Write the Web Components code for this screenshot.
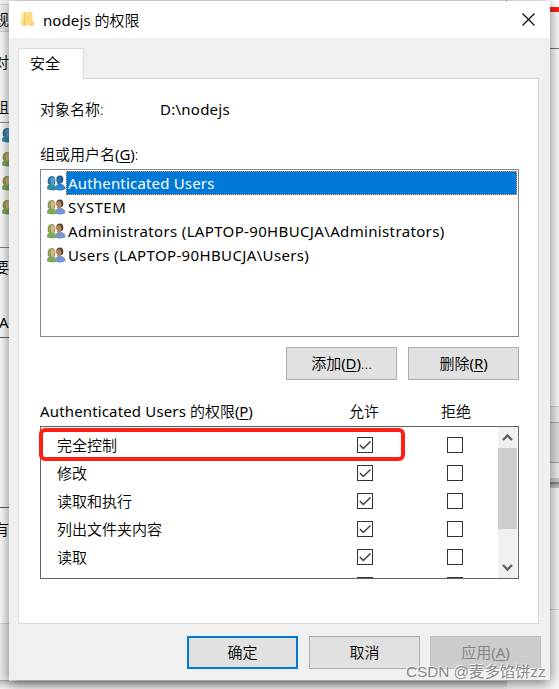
<!DOCTYPE html>
<html lang="zh-CN">
<head>
<meta charset="utf-8">
<title>nodejs 的权限</title>
<style>
html,body{margin:0;height:100%;overflow:hidden}
body{position:relative;background:#fafafa;color:#000;font:350 15px/20px "Noto Sans","Noto Sans CJK SC",sans-serif}
</style>
</head>
<body>
<back-windows></back-windows>
<perm-dialog></perm-dialog>
<water-mark>CSDN @麦多馅饼zz</water-mark>
<script>
function define(name, html){
  const t=document.createElement('template'); t.innerHTML=html;
  customElements.define(name, class extends HTMLElement{
    constructor(){super();this.attachShadow({mode:'open'}).append(t.content.cloneNode(true));}
  });
}
/* Latin run inside Chinese interface text */
define('latin-text', `<style>:host{display:inline;font-family:"Noto Sans",sans-serif;font-size:15px;font-weight:400;letter-spacing:var(--ls,0)}</style><slot></slot>`);
define('access-key', `<style>:host{display:inline;font-family:"Noto Sans",sans-serif;font-size:15px;font-weight:400;letter-spacing:-.1px}u{text-underline-offset:2px;text-decoration-thickness:1px}</style>(<u><slot></slot></u>)`);
define('folder-icon', `<style>:host{display:block;width:14px;height:17px}svg{display:block}</style>
<svg width="14" height="17" viewBox="0 0 14 17"><path d="M2 1H11.500V10.500H12.500V14.500H3Z" fill="#ffdc83"/><path d="M0 1L3.500 2V15L0 13.500Z" fill="#ffeab0"/><path d="M3 2.500L4 3V15.500L2.500 16V14L0 13V12L2.500 12.500Z" fill="#f2c75c"/><path d="M10.500 10.500H12.500V14.500H9.500Z" fill="#f3cd70"/></svg>`);
define('users-icon', `<style>:host{display:block;width:19px;height:16px;--h1:#8f9b49;--f1:#d8b98d;--b1:#7ea85b;--h2:#5d4535;--f2:#b98357;--b2:#7297cf}
:host([selected]){--h1:#2c779d;--f1:#5aa0c4;--b1:#328da3;--h2:#1b5b93;--f2:#2b71ad;--b2:#3481cd}svg{display:block}</style>
<svg width="19" height="16" viewBox="0 0 19 16"><path d="M1 9C0 5 1 1 5 1C8 1 9 4 8 9Z" style="fill:var(--h1)"/><ellipse cx="5.6" cy="5.2" rx="2.1" ry="3" style="fill:var(--f1)"/><path d="M0 14C0 10 2 8.500 5 8.500C8 8.500 9 11 9 15C5 16 2 15 0 14Z" style="fill:var(--b1)"/><path d="M4 8L6 11L7 8Z" style="fill:var(--f1)"/><ellipse cx="12.800" cy="4.500" rx="3.500" ry="4" style="fill:var(--h2)"/><ellipse cx="12" cy="5.800" rx="2.300" ry="3.600" style="fill:var(--f2)"/><path d="M8 14C8 10.500 10 9 13 9C16 9 18.500 10.500 18.500 14C15 16 11 16 8 14Z" style="fill:var(--b2)"/><path d="M10.500 8.500H13.500L12 11Z" style="fill:var(--f2)"/></svg>`);
define('push-button', `<style>:host{box-sizing:border-box;width:111px;height:33px;flex:none;display:flex;align-items:center;justify-content:center;background:#e1e1e1;border:1px solid #adadad;white-space:nowrap;padding-bottom:1px}
:host([primary]){border:2px solid #0078d7}:host([disabled]){background:#ccc;border-color:#bfbfbf;color:#838383}</style><span><slot></slot></span>`);
define('check-box', `<style>:host{display:block;box-sizing:border-box;width:16px;height:16px;border:1px solid #333;background:#fff}svg{display:none}:host([checked]) svg{display:block}</style>
<svg width="14" height="14" viewBox="0 0 14 14"><path d="M1.800 7L5.300 10.500L12.500 3.500" fill="none" stroke="#404040" stroke-width="1.500"/></svg>`);
define('user-row', `<style>:host{display:flex;height:24px;align-items:center}users-icon{margin:0 0 1px 5px}
.name{flex:1;box-sizing:border-box;height:24px;line-height:24px;padding-left:2px;white-space:nowrap}
:host([selected]) .name{background:#0078d7;color:#fff;outline:1px dotted #ff9035;outline-offset:-1px}</style>
<users-icon></users-icon><div class="name"><latin-text><slot></slot></latin-text></div>`);
define('perm-row', `<style>:host{display:grid;grid-template-columns:300px 90px 16px;height:28px;align-items:center;padding-left:16px}</style>
<slot></slot><check-box checked></check-box><check-box></check-box>`);
define('scroll-bar', `<style>:host{display:flex;flex-direction:column;width:19px;background:#f0f0f0}svg{display:block;height:21px;width:19px;flex:none}.thumb{height:81px;background:#cdcdcd}.space{flex:1}</style>
<svg viewBox="0 0 19 21"><path d="M5 13L9.500 8.500L14 13" fill="none" stroke="#606060" stroke-width="2.300"/></svg><div class="thumb"></div><div class="space"></div><svg viewBox="0 0 19 21"><path d="M5 8L9.500 12.500L14 8" fill="none" stroke="#606060" stroke-width="2.300"/></svg>`);
define('title-bar', `<style>:host{display:flex;box-sizing:border-box;align-items:center;height:37px;background:#fff;padding:0 15px 0 12px}.t{flex:1;padding-left:8px}svg{display:block}</style>
<folder-icon></folder-icon><div class="t"><slot></slot></div><svg width="13" height="13" viewBox="0 0 13 13"><path d="M.5 .5L12.500 12.500M12.500 .5L.5 12.500" stroke="#000" stroke-width="1.100"/></svg>`);
define('perm-dialog', `<style>
:host{position:absolute;left:9px;top:1px;width:541px;height:679px;background:#f0f0f0;box-shadow:0 3px 13px rgba(0,0,0,.55);display:flex;flex-direction:column}
.tab{box-sizing:border-box;width:66px;height:31px;margin:10px 0 -1px 9px;border:1px solid #d9d9d9;border-bottom:0;background:#fff;padding:4px 0 0 11px;position:relative;flex:none}
.panel{box-sizing:border-box;width:521px;height:546px;margin-left:9px;border:1px solid #d9d9d9;background:#fff;padding:0 19px 0 21px;flex:none;display:flex;flex-direction:column}
.object{display:grid;grid-template-columns:120px 1fr;height:20px;margin-top:20px}
.label{height:20px;margin-top:25px}
.users{box-sizing:border-box;width:479px;height:168px;margin-top:5px;border:1px solid #828790;padding:1px}
.actions{display:flex;justify-content:flex-end;gap:11px;margin:10px 0 0}
.heads{display:grid;grid-template-columns:309px 92px auto;height:20px;margin-top:21px}
.perms{box-sizing:border-box;width:479px;height:153px;margin-top:5px;border:1px solid #646464;padding-right:1px;display:flex;position:relative}
.rows{flex:1;overflow:hidden;padding-top:4px;height:147px}
.mark{position:absolute;left:-2px;top:1px;width:366px;height:33px;box-sizing:border-box;border:4px solid #ff2014;border-radius:6px}
.foot{display:flex;margin:12px 9px 0 0;justify-content:flex-end;gap:10px}.foot push-button:nth-child(2){margin-left:1px}
</style>
<title-bar><latin-text style="--ls:.1px">nodejs</latin-text> 的权限</title-bar>
<div class="tab">安全</div>
<div class="panel">
<div class="object"><span>对象名称:</span><latin-text style="--ls:.25px">D:\\nodejs</latin-text></div>
<div class="label">组或用户名<access-key>G</access-key>:</div>
<div class="users"><user-row selected style="--ls:.18px">Authenticated Users</user-row><user-row style="--ls:.5px">SYSTEM</user-row><user-row style="--ls:.35px">Administrators (LAPTOP-90HBUCJA\\Administrators)</user-row><user-row style="--ls:.36px">Users (LAPTOP-90HBUCJA\\Users)</user-row></div>
<div class="actions"><push-button>添加<access-key>D</access-key>...</push-button><push-button>删除<access-key>R</access-key></push-button></div>
<div class="heads"><span><latin-text style="--ls:.15px">Authenticated Users</latin-text> 的权限<access-key>P</access-key></span><span>允许</span><span>拒绝</span></div>
<div class="perms"><div class="rows"><perm-row>完全控制</perm-row><perm-row>修改</perm-row><perm-row>读取和执行</perm-row><perm-row>列出文件夹内容</perm-row><perm-row>读取</perm-row><perm-row></perm-row></div><scroll-bar></scroll-bar><div class="mark"></div></div>
</div>
<div class="foot"><push-button primary>确定</push-button><push-button>取消</push-button><push-button disabled>应用<access-key>A</access-key></push-button></div>`);
const dlg=document.querySelector('perm-dialog').shadowRoot;
dlg.querySelector('user-row').shadowRoot.querySelector('users-icon').setAttribute('selected','');
/* the empty clipped row still needs a cell before its boxes */
dlg.querySelector('perm-row:last-child').append(document.createElement('span'));
/* slivers of the windows that stay visible behind the dialog */
define('back-windows', `<style>
:host{position:absolute;inset:0;overflow:hidden}
div,span,users-icon{position:absolute}
.l{left:0;width:9px}.r{left:550px;width:9px}
span{white-space:nowrap}
</style>
<div class="l" style="top:0;height:681px;background:#fff"></div>
<div class="l" style="top:0;height:4px;background:#f4f4f4"></div>
<div class="l" style="top:4px;background:#f2f2f2;border-top:1px solid #d4d4d4;border-bottom:1px solid #d4d4d4;box-sizing:border-box;height:28px"></div>
<span style="left:-6px;top:9px">规</span><span style="left:-6px;top:52px">对</span><span style="left:-6px;top:97px">组</span>
<div class="l" style="top:122px;height:1px;background:#828790"></div>
<users-icon selected style="left:2px;top:127px"></users-icon><users-icon style="left:2px;top:151px"></users-icon><users-icon style="left:2px;top:175px"></users-icon><users-icon style="left:2px;top:199px"></users-icon>
<div class="l" style="top:247px;height:1px;background:#828790"></div>
<span style="left:-6px;top:257px">要</span><span style="left:-1px;top:312px"><latin-text>Au</latin-text></span>
<div class="l" style="top:337px;height:1px;background:#646464"></div>
<div class="l" style="top:507px;height:1px;background:#646464"></div>
<span style="left:-6px;top:519px">有</span>
<div class="l" style="top:623px;height:58px;background:#f0f0f0;border-top:1px solid #d9d9d9;border-bottom:1px solid #aaa;box-sizing:border-box"></div>
<div style="left:506px;top:0;width:53px;height:48px;background:#fff"></div>
<div style="left:0;top:0;width:506px;height:1px;background:#f0f0f0;border-right:1px solid #888"></div>
<div class="r" style="top:7px;height:5px;background:#ff2014"></div>
<div class="r" style="top:48px;height:1px;background:#777"></div>
<div class="r" style="top:49px;height:357px;background:#fff"></div>
<div class="r" style="top:406px;height:16px;background:#f0f0f0;border-top:1px solid #d4d4d4;box-sizing:border-box"></div>
<div class="r" style="top:422px;height:41px;background:#e1e1e1;border:solid #adadad;border-width:1px 0;box-sizing:border-box"></div>
<div class="r" style="top:463px;height:15px;background:#f0f0f0"></div>
<div class="r" style="top:478px;height:10px;background:linear-gradient(#ccc 0 35%,#888 40% 55%,#aaa 60%,#c5c5c5)"></div>
<div class="r" style="top:609px;height:1px;background:#d9d9d9"></div>
<div style="left:0;top:681px;width:507px;height:8px;background:linear-gradient(#c4c4c4,#f4f4f4)"></div>`);
define('water-mark', `<style>:host{position:absolute;left:406px;top:661px;white-space:nowrap;font:15.300px/22px "Liberation Sans","Noto Sans CJK SC",sans-serif;color:rgba(125,125,125,.9);text-shadow:-1px -1px 0 rgba(255,255,255,.75)}</style><slot></slot>`);
</script>
</body>
</html>
